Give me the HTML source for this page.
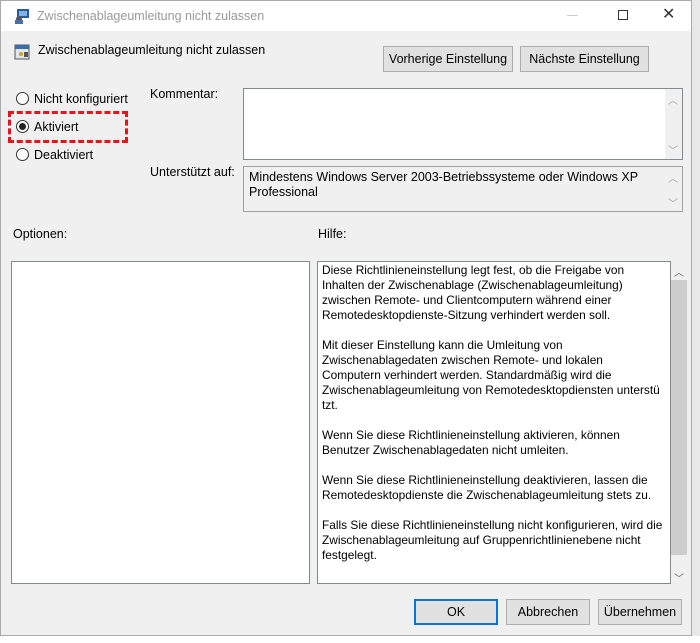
<!DOCTYPE html>
<html><head><meta charset="utf-8"><style>
*{margin:0;padding:0;box-sizing:border-box}
body{width:700px;height:643px;background:#fff;font-family:"Liberation Sans",sans-serif;font-size:12px;color:#000;position:relative;overflow:hidden}
.a{position:absolute}
.win{left:0;top:0;width:692px;height:636px;background:#f0f0f0;border:1px solid #aaa}
.btn{position:absolute;background:#e1e1e1;border:1px solid #adadad;text-align:center;font-size:12px}
.box{position:absolute;background:#fff;border:1px solid #828790}
.sb{position:absolute;background:#f0f0f0}
.arr{position:absolute;color:#a0a0a0;font-size:10px;width:16px;text-align:center}
.radio{position:absolute;width:13px;height:13px;border:1px solid #333;border-radius:50%;background:#fff}
.help{position:absolute;left:322px;top:263px;line-height:15px;white-space:pre;font-size:11.9px}
</style></head><body>
<div class="a" style="left:692px;top:0;width:8px;height:643px;background:#e8e8e8"></div>
<div class="a" style="left:0;top:636px;width:700px;height:7px;background:#fff"></div>
<div class="a win"></div>
<div class="a" style="left:1px;top:1px;width:690px;height:30px;background:#fff"></div>
<svg class="a" style="left:14px;top:8px" width="16" height="16"><rect x="3" y="1" width="12" height="9" fill="#2a5c9a"/><rect x="5" y="3" width="8" height="5" fill="#7fb3e8"/><circle cx="5" cy="11" r="3" fill="#556"/><rect x="1" y="12" width="8" height="4" fill="#4a6fa5"/></svg>
<div class="a" style="left:37px;top:9px;color:#999;font-size:12.5px">Zwischenablageumleitung nicht zulassen</div>
<div class="a" style="left:567px;top:15px;width:11px;height:1px;background:#ccc"></div>
<div class="a" style="left:618px;top:10px;width:10px;height:10px;border:1px solid #333"></div>
<div class="a" style="left:662px;top:4px;font-size:16px;color:#333">✕</div>
<svg class="a" style="left:14px;top:44px" width="16" height="16"><rect x="1" y="1" width="14" height="14" fill="#dfe6ee" stroke="#555"/><rect x="1" y="1" width="14" height="4" fill="#3a6ea5"/><circle cx="7" cy="10" r="2" fill="#c9a227"/><rect x="10" y="8" width="4" height="5" fill="#555"/></svg>
<div class="a" style="left:38px;top:43px;font-size:12.5px">Zwischenablageumleitung nicht zulassen</div>
<div class="btn" style="left:383px;top:46px;width:130px;height:26px;line-height:24px;font-size:12.5px">Vorherige Einstellung</div>
<div class="btn" style="left:520px;top:46px;width:129px;height:26px;line-height:24px;font-size:12.5px">Nächste Einstellung</div>
<div class="radio" style="left:16px;top:92px"></div>
<div class="a" style="left:34px;top:92px;font-size:12.5px">Nicht konfiguriert</div>
<div class="radio" style="left:16px;top:120px"></div><div class="a" style="left:19px;top:123px;width:7px;height:7px;border-radius:50%;background:#222"></div>
<div class="a" style="left:34px;top:120px;font-size:12.5px">Aktiviert</div>
<div class="radio" style="left:16px;top:148px"></div>
<div class="a" style="left:34px;top:148px;font-size:12.5px">Deaktiviert</div>
<div class="a" style="left:8px;top:111px;width:120px;height:32px;border:3px dashed #e8141a"></div>
<div class="a" style="left:150px;top:87px;font-size:12.5px">Kommentar:</div>
<div class="box" style="left:243px;top:88px;width:440px;height:72px"></div>
<div class="sb" style="left:665px;top:89px;width:17px;height:70px"></div>
<div class="arr" style="left:665px;top:92px">︿</div><div class="arr" style="left:665px;top:142px">﹀</div>
<div class="a" style="left:150px;top:165px;font-size:12.5px">Unterstützt auf:</div>
<div class="box" style="left:243px;top:166px;width:440px;height:46px;background:#f0f0f0;border-color:#a0a0a0"></div>
<div class="a" style="left:249px;top:170px;line-height:15px;font-size:12.5px">Mindestens Windows Server 2003-Betriebssysteme oder Windows XP<br>Professional</div>
<div class="arr" style="left:665px;top:170px">︿</div><div class="arr" style="left:665px;top:195px">﹀</div>
<div class="a" style="left:13px;top:227px;font-size:12.5px">Optionen:</div>
<div class="a" style="left:318px;top:227px;font-size:12.5px">Hilfe:</div>
<div class="box" style="left:11px;top:261px;width:299px;height:323px"></div>
<div class="box" style="left:317px;top:261px;width:354px;height:323px"></div>
<div class="sb" style="left:671px;top:262px;width:16px;height:321px"></div>
<div class="a" style="left:671px;top:280px;width:16px;height:275px;background:#cdcdcd"></div>
<div class="arr" style="left:671px;top:264px;color:#606060">︿</div><div class="arr" style="left:671px;top:570px;color:#606060">﹀</div>
<div class="help">Diese Richtlinieneinstellung legt fest, ob die Freigabe von
Inhalten der Zwischenablage (Zwischenablageumleitung)
zwischen Remote- und Clientcomputern während einer
Remotedesktopdienste-Sitzung verhindert werden soll.

Mit dieser Einstellung kann die Umleitung von
Zwischenablagedaten zwischen Remote- und lokalen
Computern verhindert werden. Standardmäßig wird die
Zwischenablageumleitung von Remotedesktopdiensten unterstü
tzt.

Wenn Sie diese Richtlinieneinstellung aktivieren, können
Benutzer Zwischenablagedaten nicht umleiten.

Wenn Sie diese Richtlinieneinstellung deaktivieren, lassen die
Remotedesktopdienste die Zwischenablageumleitung stets zu.

Falls Sie diese Richtlinieneinstellung nicht konfigurieren, wird die
Zwischenablageumleitung auf Gruppenrichtlinienebene nicht
festgelegt.</div>
<div class="btn" style="left:414px;top:599px;width:84px;height:26px;line-height:22px;border:2px solid #0078d7;font-size:12.5px">OK</div>
<div class="btn" style="left:506px;top:599px;width:84px;height:26px;line-height:24px;font-size:12.5px">Abbrechen</div>
<div class="btn" style="left:598px;top:599px;width:84px;height:26px;line-height:24px;font-size:12.5px">Übernehmen</div>
</body></html>
